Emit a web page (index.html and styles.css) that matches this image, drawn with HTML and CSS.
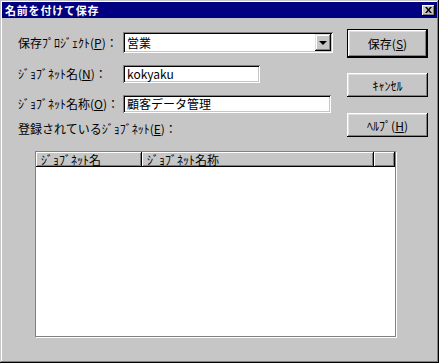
FILE: index.html
```html
<!DOCTYPE html>
<html lang="ja">
<head>
<meta charset="utf-8">
<title>名前を付けて保存</title>
<link rel="stylesheet" href="styles.css">
</head>
<body>
<div class="window">
  <div class="titlebar">
    <span class="title">名前を付けて保存</span>
    <span class="close">
      <svg width="7" height="6" viewBox="0 0 7 6"><path d="M0 0h2l1.5 2 1.5-2h2l-2.5 3 2.5 3h-2l-1.5-2-1.5 2h-2l2.5-3z" fill="#000"/></svg>
    </span>
  </div>
  <div class="content">
    <div class="top">
      <div class="form">
        <span class="label">保存ﾌﾟﾛｼﾞｪｸﾄ(<u>P</u>)：</span>
        <div class="combo">
          <span class="combo-text">営業</span>
          <span class="drop"><span class="tri"></span></span>
        </div>
        <span class="label">ｼﾞｮﾌﾞﾈｯﾄ名(<u>N</u>)：</span>
        <div class="field field-short">kokyaku</div>
        <span class="label">ｼﾞｮﾌﾞﾈｯﾄ名称(<u>O</u>)：</span>
        <div class="field field-long">顧客データ管理</div>
        <span class="label label-wide">登録されているｼﾞｮﾌﾞﾈｯﾄ(<u>E</u>)：</span>
      </div>
      <div class="buttons">
        <div class="btn btn-default">保存(<u>S</u>)</div>
        <div class="btn btn-cancel">ｷｬﾝｾﾙ</div>
        <div class="btn btn-help">ﾍﾙﾌﾟ(<u>H</u>)</div>
      </div>
    </div>
    <div class="list">
      <div class="header">
        <div class="hcell hcell-name">ｼﾞｮﾌﾞﾈｯﾄ名</div>
        <div class="hcell hcell-title">ｼﾞｮﾌﾞﾈｯﾄ名称</div>
        <div class="hcell hcell-rest"></div>
      </div>
    </div>
  </div>
</div>
</body>
</html>
```

FILE: styles.css
```css
html, body {
  margin: 0;
  padding: 0;
}
body {
  width: 439px;
  height: 363px;
  overflow: hidden;
  background: #c6c6c6;
  font-family: "Noto Sans CJK JP", "Noto Sans", sans-serif;
  font-size: 12px;
  color: #000;
}
u {
  text-decoration: underline;
  text-underline-offset: 1px;
}
.window {
  box-sizing: border-box;
  width: 439px;
  height: 363px;
  padding: 2px;
  background: #c6c6c6;
  box-shadow: inset -1px -1px #000, inset 1px 1px #c6c6c6, inset -2px -2px #808080, inset 2px 2px #fff;
  display: flex;
  flex-direction: column;
}
.titlebar {
  height: 16px;
  background: #000080;
  display: flex;
  align-items: center;
  justify-content: space-between;
  padding: 0 2px 0 3px;
}
.title {
  color: #fff;
  font-weight: bold;
  font-size: 11px;
  line-height: 16px;
  letter-spacing: 0.8px;
}
.close {
  box-sizing: border-box;
  width: 13px;
  height: 11px;
  background: #c6c6c6;
  box-shadow: inset -1px -1px #000, inset 1px 1px #fff, inset -2px -2px #808080;
  display: flex;
  align-items: center;
  justify-content: center;
  padding: 0 1px 1px 0;
}
.content {
  padding: 11px 0 0 16px;
}
.top {
  display: flex;
  align-items: flex-start;
}
.form {
  margin-top: 3px;
  display: grid;
  grid-template-columns: 105px 210px;
  row-gap: 12px;
  align-items: center;
}
.label {
  line-height: 14px;
  white-space: nowrap;
}
.label-wide {
  grid-column: 1 / -1;
  margin-top: -3px;
}
.combo, .field {
  box-sizing: border-box;
  background: #fff;
  box-shadow: inset 1px 1px #808080, inset -1px -1px #fff, inset 2px 2px #000, inset -2px -2px #c6c6c6;
}
.combo {
  height: 21px;
  width: 210px;
  display: flex;
  align-items: center;
  padding: 2px;
}
.combo-text {
  flex: 1;
  padding-left: 2px;
  line-height: 15px;
}
.drop {
  box-sizing: border-box;
  width: 16px;
  height: 17px;
  background: #c6c6c6;
  box-shadow: inset -1px -1px #000, inset 1px 1px #dfdfdf, inset -2px -2px #808080, inset 2px 2px #fff;
  display: flex;
  align-items: center;
  justify-content: center;
}
.tri {
  width: 0;
  height: 0;
  border-left: 4px solid transparent;
  border-right: 4px solid transparent;
  border-top: 4px solid #000;
  margin: 1px 1px 0 0;
}
.field {
  height: 18px;
  padding: 0 4px;
  line-height: 18px;
}
.field-short {
  width: 137px;
}
.field-long {
  width: 208px;
}
.buttons {
  margin-left: 14px;
  display: flex;
  flex-direction: column;
}
.btn {
  box-sizing: border-box;
  width: 81px;
  height: 24px;
  display: flex;
  align-items: center;
  justify-content: center;
  background: #c6c6c6;
  box-shadow: inset -1px -1px #000, inset 1px 1px #fff, inset -2px -2px #808080, inset 2px 2px #dfdfdf;
}
.btn-default {
  height: 29px;
  border: 1px solid #000;
}
.btn-cancel {
  margin-top: 15px;
}
.btn-help {
  margin-top: 16px;
}
.list {
  box-sizing: border-box;
  margin: 14px 0 0 17px;
  width: 361px;
  height: 186px;
  background: #fff;
  border: 1px solid #808080;
  box-shadow: 1px 1px 0 #fff;
}
.header {
  display: flex;
  height: 15px;
}
.hcell {
  box-sizing: border-box;
  height: 15px;
  background: #c6c6c6;
  box-shadow: inset -1px -1px #000, inset 1px 1px #fff, inset -2px -2px #808080;
  line-height: 15px;
  padding-left: 5px;
  white-space: nowrap;
}
.hcell-name {
  width: 106px;
}
.hcell-title {
  width: 232px;
}
.hcell-rest {
  flex: 1;
}
```
